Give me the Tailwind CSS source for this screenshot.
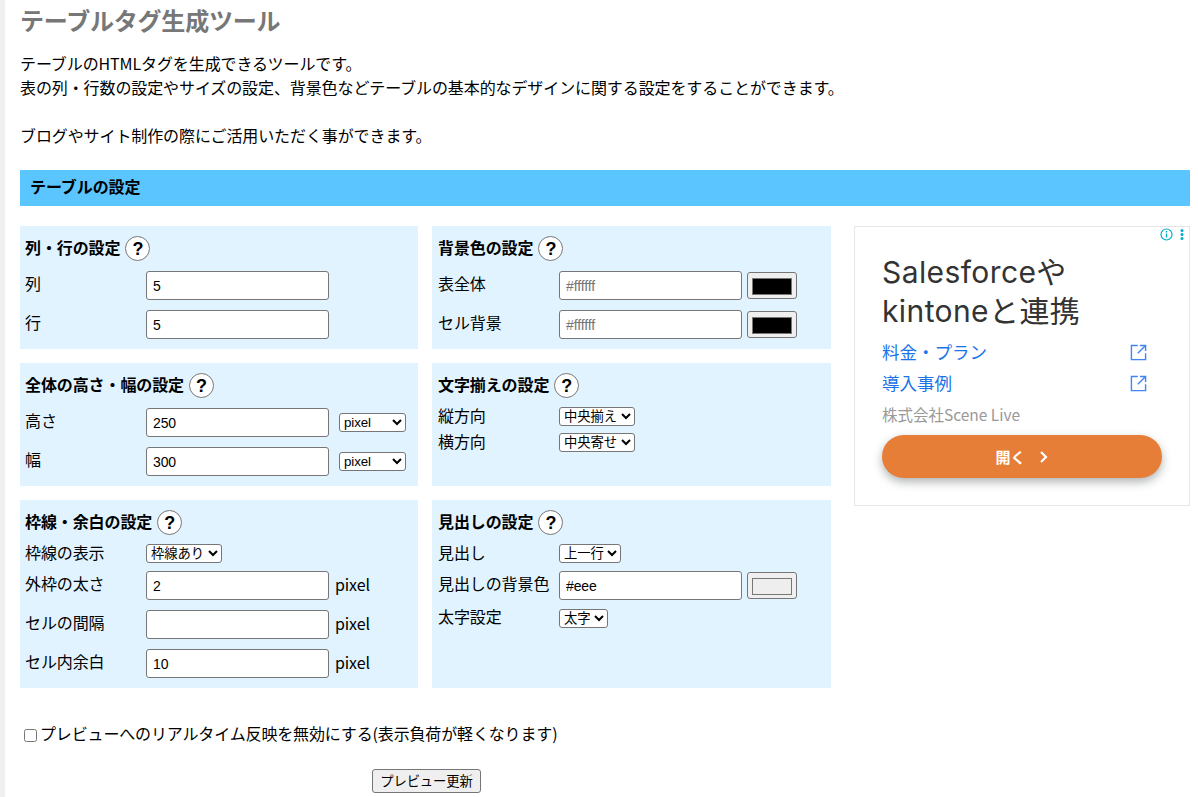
<!DOCTYPE html>
<html lang="ja">
<head>
<meta charset="utf-8">
<title>テーブルタグ生成ツール</title>
<script src="https://cdn.jsdelivr.net/npm/@tailwindcss/browser@4"></script>
</head>
<body class="h-[797px] overflow-hidden bg-white text-black text-[16px] leading-[24px] tracking-[-0.1px] font-['Noto_Sans_CJK_JP',sans-serif]">
<div class="flex h-[797px]">
  <div class="w-[5px] shrink-0 bg-[#f0f0f0]"></div>
  <main class="ml-[15px] w-[1170px]">
    <h1 class="h-[42px] text-[24px] leading-[39px] font-bold tracking-[-0.2px] text-[#777]">テーブルタグ生成ツール</h1>
    <div class="mt-[9px]">
      <p>テーブルのHTMLタグを生成できるツールです。</p>
      <p>表の列・行数の設定やサイズの設定、背景色などテーブルの基本的なデザインに関する設定をすることができます。</p>
      <p class="mt-[24px]">ブログやサイト制作の際にご活用いただく事ができます。</p>
    </div>
    <h2 class="mt-[23px] h-[36px] bg-[#5ac5ff] pl-[10px] font-bold leading-[33px]">テーブルの設定</h2>

    <div class="mt-[20px] flex">
      <div class="grid w-[811px] grid-cols-[398px_399px] gap-[14px]">

        <section class="h-[123px] bg-[#e0f3ff] px-[5px] pt-[10px]">
          <div class="flex h-[25px] items-center gap-[5px] font-bold"><span class="-translate-y-[2px]">列・行の設定</span><span class="flex h-[25px] w-[25px] items-center justify-center rounded-full border border-[#777] bg-white font-['Liberation_Sans',sans-serif] text-[18px] font-bold">?</span></div>
          <div class="mt-[10px] flex h-[29px] items-center"><span class="w-[121px] -translate-y-[3px]">列</span><input value="5" class="h-[29px] w-[183px] rounded-[3px] border border-[#767676] bg-white px-[6px] font-['Liberation_Sans',sans-serif] text-[14px]"></div>
          <div class="mt-[10px] flex h-[29px] items-center"><span class="w-[121px] -translate-y-[3px]">行</span><input value="5" class="h-[29px] w-[183px] rounded-[3px] border border-[#767676] bg-white px-[6px] font-['Liberation_Sans',sans-serif] text-[14px]"></div>
        </section>

        <section class="h-[123px] bg-[#e0f3ff] px-[6px] pt-[10px]">
          <div class="flex h-[25px] items-center gap-[5px] font-bold"><span class="-translate-y-[2px]">背景色の設定</span><span class="flex h-[25px] w-[25px] items-center justify-center rounded-full border border-[#777] bg-white font-['Liberation_Sans',sans-serif] text-[18px] font-bold">?</span></div>
          <div class="mt-[10px] flex h-[29px] items-center"><span class="w-[121px] -translate-y-[3px]">表全体</span><input placeholder="#ffffff" class="h-[29px] w-[183px] rounded-[3px] border border-[#767676] bg-white px-[6px] font-['Liberation_Sans',sans-serif] text-[14px] placeholder:text-[#757575]"><input type="color" value="#000000" class="ml-[5px] h-[27px] w-[50px] rounded-[3px] border border-[#767676] bg-[#efefef] px-[4px] py-[5px] [&::-webkit-color-swatch-wrapper]:p-0 [&::-webkit-color-swatch]:h-[15px]"></div>
          <div class="mt-[10px] flex h-[29px] items-center"><span class="w-[121px] -translate-y-[3px]">セル背景</span><input placeholder="#ffffff" class="h-[29px] w-[183px] rounded-[3px] border border-[#767676] bg-white px-[6px] font-['Liberation_Sans',sans-serif] text-[14px] placeholder:text-[#757575]"><input type="color" value="#000000" class="ml-[5px] h-[27px] w-[50px] rounded-[3px] border border-[#767676] bg-[#efefef] px-[4px] py-[5px] [&::-webkit-color-swatch-wrapper]:p-0 [&::-webkit-color-swatch]:h-[15px]"></div>
        </section>

        <section class="h-[123px] bg-[#e0f3ff] px-[5px] pt-[10px]">
          <div class="flex h-[25px] items-center gap-[5px] font-bold"><span class="-translate-y-[2px]">全体の高さ・幅の設定</span><span class="flex h-[25px] w-[25px] items-center justify-center rounded-full border border-[#777] bg-white font-['Liberation_Sans',sans-serif] text-[18px] font-bold">?</span></div>
          <div class="mt-[10px] flex h-[29px] items-center"><span class="w-[121px] -translate-y-[3px]">高さ</span><input value="250" class="h-[29px] w-[183px] rounded-[3px] border border-[#767676] bg-white px-[6px] font-['Liberation_Sans',sans-serif] text-[14px]"><select class="ml-[10px] h-[19px] w-[67px] rounded-[3px] border border-[#767676] bg-white font-['Liberation_Sans',sans-serif] text-[13.33px] leading-[17px]"><option>pixel</option></select></div>
          <div class="mt-[10px] flex h-[29px] items-center"><span class="w-[121px] -translate-y-[3px]">幅</span><input value="300" class="h-[29px] w-[183px] rounded-[3px] border border-[#767676] bg-white px-[6px] font-['Liberation_Sans',sans-serif] text-[14px]"><select class="ml-[10px] h-[19px] w-[67px] rounded-[3px] border border-[#767676] bg-white font-['Liberation_Sans',sans-serif] text-[13.33px] leading-[17px]"><option>pixel</option></select></div>
        </section>

        <section class="h-[123px] bg-[#e0f3ff] px-[6px] pt-[10px]">
          <div class="flex h-[25px] items-center gap-[5px] font-bold"><span class="-translate-y-[2px]">文字揃えの設定</span><span class="flex h-[25px] w-[25px] items-center justify-center rounded-full border border-[#777] bg-white font-['Liberation_Sans',sans-serif] text-[18px] font-bold">?</span></div>
          <div class="mt-[9px] flex h-[19px] items-center"><span class="w-[121px] -translate-y-[2px]">縦方向</span><select class="h-[19px] w-[76px] rounded-[3px] border border-[#767676] bg-white font-['Liberation_Sans','Noto_Sans_CJK_JP',sans-serif] text-[13.33px] leading-[15px]"><option>中央揃え</option></select></div>
          <div class="mt-[7px] flex h-[19px] items-center"><span class="w-[121px] -translate-y-[2px]">横方向</span><select class="h-[19px] w-[76px] rounded-[3px] border border-[#767676] bg-white font-['Liberation_Sans','Noto_Sans_CJK_JP',sans-serif] text-[13.33px] leading-[15px]"><option>中央寄せ</option></select></div>
        </section>

        <section class="h-[188px] bg-[#e0f3ff] px-[5px] pt-[10px]">
          <div class="flex h-[25px] items-center gap-[5px] font-bold"><span class="-translate-y-[2px]">枠線・余白の設定</span><span class="flex h-[25px] w-[25px] items-center justify-center rounded-full border border-[#777] bg-white font-['Liberation_Sans',sans-serif] text-[18px] font-bold">?</span></div>
          <div class="mt-[9px] flex h-[19px] items-center"><span class="w-[121px] -translate-y-[2px]">枠線の表示</span><select class="h-[19px] w-[76px] rounded-[3px] border border-[#767676] bg-white font-['Liberation_Sans','Noto_Sans_CJK_JP',sans-serif] text-[13.33px] leading-[15px]"><option>枠線あり</option></select></div>
          <div class="mt-[8px] flex h-[29px] items-center"><span class="w-[121px] -translate-y-[3px]">外枠の太さ</span><input value="2" class="h-[29px] w-[183px] rounded-[3px] border border-[#767676] bg-white px-[6px] font-['Liberation_Sans',sans-serif] text-[14px]"><span class="ml-[6px] -translate-y-[2px]">pixel</span></div>
          <div class="mt-[10px] flex h-[29px] items-center"><span class="w-[121px] -translate-y-[3px]">セルの間隔</span><input class="h-[29px] w-[183px] rounded-[3px] border border-[#767676] bg-white px-[6px] font-['Liberation_Sans',sans-serif] text-[14px]"><span class="ml-[6px] -translate-y-[2px]">pixel</span></div>
          <div class="mt-[10px] flex h-[29px] items-center"><span class="w-[121px] -translate-y-[3px]">セル内余白</span><input value="10" class="h-[29px] w-[183px] rounded-[3px] border border-[#767676] bg-white px-[6px] font-['Liberation_Sans',sans-serif] text-[14px]"><span class="ml-[6px] -translate-y-[2px]">pixel</span></div>
        </section>

        <section class="h-[188px] bg-[#e0f3ff] px-[6px] pt-[10px]">
          <div class="flex h-[25px] items-center gap-[5px] font-bold"><span class="-translate-y-[2px]">見出しの設定</span><span class="flex h-[25px] w-[25px] items-center justify-center rounded-full border border-[#777] bg-white font-['Liberation_Sans',sans-serif] text-[18px] font-bold">?</span></div>
          <div class="mt-[9px] flex h-[19px] items-center"><span class="w-[121px] -translate-y-[2px]">見出し</span><select class="h-[19px] w-[62px] rounded-[3px] border border-[#767676] bg-white font-['Liberation_Sans','Noto_Sans_CJK_JP',sans-serif] text-[13.33px] leading-[15px]"><option>上一行</option></select></div>
          <div class="mt-[8px] flex h-[29px] items-center"><span class="w-[121px] -translate-y-[3px]">見出しの背景色</span><input value="#eee" class="h-[29px] w-[183px] rounded-[3px] border border-[#767676] bg-white px-[6px] font-['Liberation_Sans',sans-serif] text-[14px]"><input type="color" value="#eeeeee" class="ml-[5px] h-[27px] w-[50px] rounded-[3px] border border-[#767676] bg-[#efefef] px-[4px] py-[5px] [&::-webkit-color-swatch-wrapper]:p-0 [&::-webkit-color-swatch]:h-[15px]"></div>
          <div class="mt-[9px] flex h-[19px] items-center"><span class="w-[121px] -translate-y-[3px]">太字設定</span><select class="h-[19px] w-[49px] rounded-[3px] border border-[#767676] bg-white font-['Liberation_Sans','Noto_Sans_CJK_JP',sans-serif] text-[13.33px] leading-[15px]"><option>太字</option></select></div>
        </section>
      </div>

      <aside class="relative ml-[23px] h-[280px] w-[336px] border border-[#e6e6e6] pl-[27px] pt-[26px] tracking-normal">
        <div class="absolute right-[5px] top-[1px] flex items-center gap-[7px]">
          <svg width="13" height="13" viewBox="0 0 13 13" fill="none" stroke="#00aecd"><circle cx="6.5" cy="6.5" r="5.5" stroke-width="1.2"/><path d="M6.5 5.5v4M6.5 3v1.4" stroke-width="1.4"/></svg>
          <svg width="4" height="13" viewBox="0 0 4 13" fill="#00aecd"><circle cx="2" cy="2.5" r="1.5"/><circle cx="2" cy="6.5" r="1.5"/><circle cx="2" cy="10.5" r="1.5"/></svg>
        </div>
        <p class="text-[30px] leading-[39px] tracking-[0.4px] text-[#333] font-['Inter','Noto_Sans_CJK_JP',sans-serif]">Salesforceや<br>kintoneと連携</p>
        <div class="mt-[5px] flex h-[31px] w-[265px] items-center justify-between text-[17.5px] text-[#1a73e8]"><span>料金・プラン</span><svg class="translate-y-[1px]" width="17" height="17" viewBox="0 0 24 24" fill="none" stroke="#4285f4" stroke-width="2"><path d="M11 2H2v20h20v-9M22 2 11 13M14 2h8v8"/></svg></div>
        <div class="flex h-[31px] w-[265px] items-center justify-between text-[17.5px] text-[#1a73e8]"><span>導入事例</span><svg class="translate-y-[1px]" width="17" height="17" viewBox="0 0 24 24" fill="none" stroke="#4285f4" stroke-width="2"><path d="M11 2H2v20h20v-9M22 2 11 13M14 2h8v8"/></svg></div>
        <p class="mt-[1px] h-[31px] text-[15.5px] leading-[31px] text-[#999]">株式会社Scene Live</p>
        <div class="mt-[5px] flex h-[43px] w-[280px] items-center justify-center gap-[13px] rounded-full bg-[#e67e37] text-[15px] font-bold text-white shadow-[0_4px_10px_rgba(60,64,67,0.4)]"><span>開く</span><svg width="10" height="14" viewBox="0 0 10 14" fill="none" stroke="white" stroke-width="2.2"><path d="M2 2l5 5-5 5"/></svg></div>
      </aside>
    </div>

    <label class="mt-[34px] ml-[4px] flex h-[24px] items-center gap-[3px] tracking-[-0.15px]"><input type="checkbox" class="m-0 h-[13px] w-[13px] translate-y-[1px]"><span class="-translate-y-[1px]">プレビューへのリアルタイム反映を無効にする(表示負荷が軽くなります)</span></label>
    <div class="mt-[23px] flex pl-[352px]"><button class="h-[24px] w-[109px] rounded-[3px] border border-[#767676] bg-[#efefef] text-[13.33px] leading-[18px]">プレビュー更新</button></div>
  </main>
</div>
</body>
</html>
